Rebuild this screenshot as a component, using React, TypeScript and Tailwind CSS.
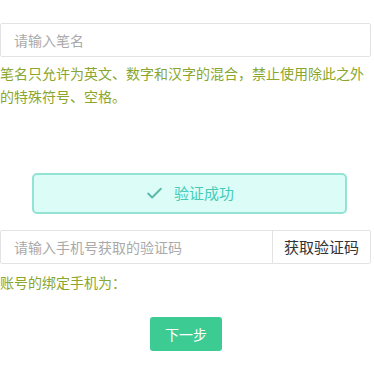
import { Check } from 'lucide-react';

const font = { fontFamily: '"Noto Sans CJK SC", "Noto Sans", sans-serif' };

export default function App() {
  return (
    <div className="w-[374px] h-[368px] bg-white pt-[23px] overflow-hidden" style={font}>
      <div className="w-[371px] h-[34px] border border-[#e3e3e3] rounded-[2px] flex items-center pl-[13px]">
        <span className="text-[14px] text-[#aaaaaa]">请输入笔名</span>
      </div>

      <p className="mt-[5px] w-[374px] text-[14px] leading-[23px] text-[#8aa62c]">
        笔名只允许为英文、数字和汉字的混合，禁止使用除此之外的特殊符号、空格。
      </p>

      <div className="mt-[65px] ml-[32px] w-[315px] h-[41px] rounded-[5px] border-2 border-[#93e3d4] bg-[#dcfdf7] flex items-center justify-center gap-[10px]">
        <Check className="w-[19px] h-[19px] text-[#5db9aa]" strokeWidth={2.5} />
        <span className="text-[15px] text-[#45cbb8]">验证成功</span>
      </div>

      <div className="mt-[16px] w-[371px] h-[34px] border border-[#e3e3e3] rounded-[2px] flex">
        <div className="flex-1 flex items-center pl-[13px]">
          <span className="text-[14px] text-[#aaaaaa]">请输入手机号获取的验证码</span>
        </div>
        <div className="w-[98px] border-l border-[#e3e3e3] flex items-center justify-center">
          <span className="text-[15px] text-[#333333]">获取验证码</span>
        </div>
      </div>

      <p className="mt-[7px] text-[14px] leading-[23px] text-[#8aa62c]">账号的绑定手机为：</p>

      <div className="mt-[23px] flex justify-center">
        <div className="ml-[-2px] w-[72px] h-[34px] rounded-[3px] bg-[#3dcb94] flex items-center justify-center">
          <span className="text-[14px] text-white">下一步</span>
        </div>
      </div>
    </div>
  );
}
